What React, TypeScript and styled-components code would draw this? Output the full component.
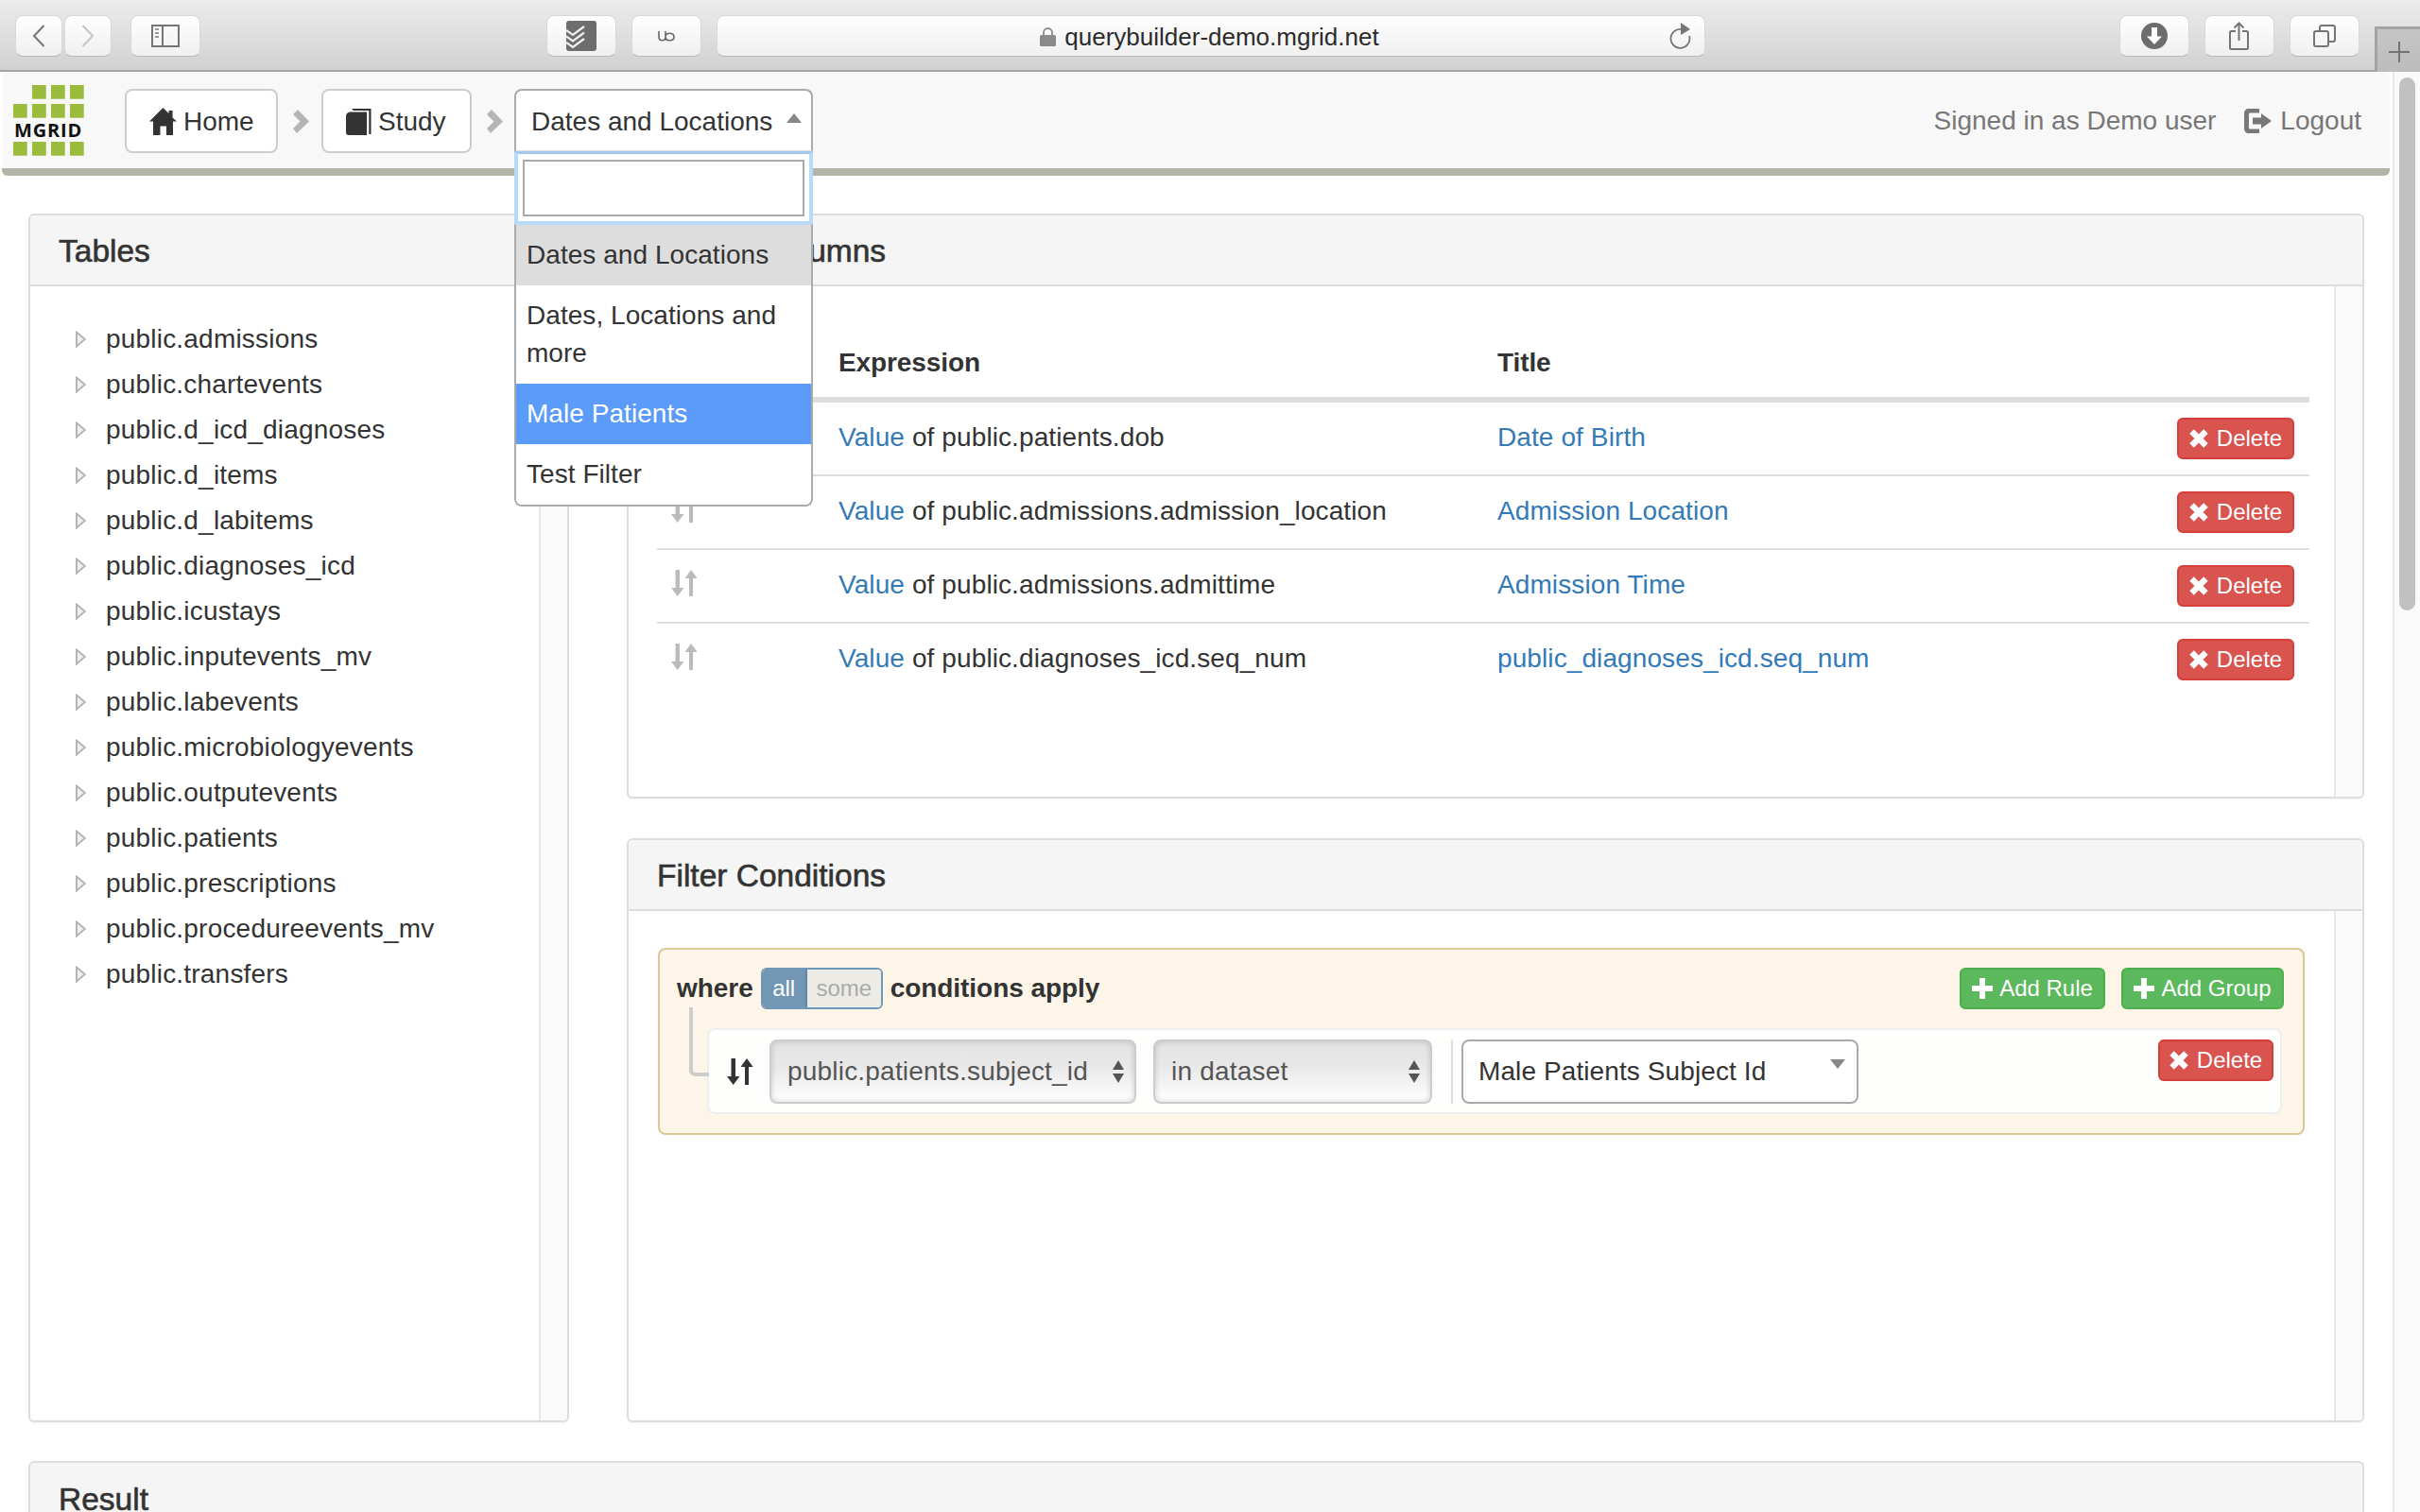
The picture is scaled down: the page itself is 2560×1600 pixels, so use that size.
import React from 'react'
import styled, { createGlobalStyle } from 'styled-components'

const GlobalStyle = createGlobalStyle`
  html, body {
    margin: 0;
    padding: 0;
    height: 1600px;
    overflow: hidden;
    background: #fff;
    font-family: "Liberation Sans", Arial, sans-serif;
    font-size: 28px;
    color: #333;
  }
  * { box-sizing: border-box; }
`

const Window = styled.div`
  width: 2560px;
  height: 1600px;
  display: flex;
  flex-direction: column;
  overflow: hidden;
`

/* browser toolbar */
const Toolbar = styled.div`
  height: 76px;
  flex: none;
  display: flex;
  align-items: flex-start;
  padding-top: 16px;
  padding-left: 16px;
  background: linear-gradient(#ececec, #d1d1d1);
  border-bottom: 2px solid #a6a6a6;
`

const ToolButton = styled.div<{ $w: number; $ml?: number }>`
  width: ${p => p.$w}px;
  height: 44px;
  margin-left: ${p => p.$ml ?? 0}px;
  flex: none;
  display: flex;
  align-items: center;
  justify-content: center;
  background: linear-gradient(#fefefe, #f0f0f0);
  border-radius: 8px;
  border: 1px solid #d8d8d8;
  border-bottom: 1px solid #b8b8b8;
`

const UrlBar = styled(ToolButton)`
  position: relative;
  gap: 9px;
  font-size: 26px;
  color: #2b2b2b;
  padding: 2px 3px 0 0;
`

const ReloadSlot = styled.span`
  position: absolute;
  right: 13px;
  top: 7px;
  display: flex;
`

const NewTab = styled.div`
  width: 48px;
  height: 48px;
  margin-left: 16px;
  margin-top: 12px;
  margin-bottom: -2px;
  padding-top: 2px;
  flex: none;
  display: flex;
  align-items: center;
  justify-content: center;
  background: linear-gradient(#c6c6c6, #bcbcbc);
  border-top: 3px solid #a3a3a3;
  border-left: 3px solid #a3a3a3;
`

const Viewport = styled.div`
  flex: 1;
  min-height: 0;
  display: flex;
`

const Page = styled.div`
  width: 2531px;
  flex: none;
`

const ScrollTrack = styled.div`
  width: 29px;
  flex: none;
  background: #fafafa;
  border-left: 2px solid #e9e9e9;
  padding: 6px 5px 0 5px;
`

const ScrollThumb = styled.div`
  height: 564px;
  border-radius: 9px;
  background: #c1c1c1;
`

/* app nav */
const NavBar = styled.nav`
  height: 110px;
  margin-left: 2px;
  width: 2526px;
  padding: 2px 30px 0 12px;
  display: flex;
  align-items: center;
  background: #f8f8f8;
  border-bottom: 8px solid #b0b5a8;
  border-radius: 6px;
`

const Crumb = styled.div<{ $w: number; $ml?: number; $gap: number }>`
  width: ${p => p.$w}px;
  height: 68px;
  margin-left: ${p => p.$ml ?? 0}px;
  padding: 1px 0 0 24px;
  display: flex;
  flex: none;
  align-items: center;
  gap: ${p => p.$gap}px;
  background: #fff;
  border: 2px solid #ccc;
  border-radius: 8px;
`

const CrumbArrow = styled.svg`
  margin: 0 13px 0 16px;
  flex: none;
`

const SelectWrap = styled.div`
  position: relative;
  width: 316px;
  height: 68px;
  margin-left: -1px;
  flex: none;
`

const SelectHead = styled.div`
  height: 66px;
  padding: 2px 10px 0 16px;
  display: flex;
  align-items: center;
  justify-content: space-between;
  white-space: nowrap;
  background: #fff;
  border: 2px solid #aaa;
  border-bottom: 1px solid #ddd;
  border-radius: 8px 8px 0 0;
`

const CaretUp = styled.span`
  width: 0;
  height: 0;
  margin-top: -8px;
  border-left: 8px solid transparent;
  border-right: 8px solid transparent;
  border-bottom: 10px solid #888;
`

const Menu = styled.div`
  position: absolute;
  left: 0;
  top: 66px;
  width: 316px;
  z-index: 10;
  background: #fff;
  border: 2px solid #aaa;
  border-top: 0;
  border-radius: 0 0 8px 8px;
`

const SearchBox = styled.div`
  height: 78px;
  margin: 0 -2px;
  padding: 6px 5px 5px 5px;
  border: 4px solid #b9d9f8;
  border-top: 3px solid #a3c9ee;
  border-radius: 2px;
  background: #fff;
`

const SearchInput = styled.input`
  display: block;
  width: 100%;
  height: 100%;
  margin: 0;
  padding: 0;
  background: #fff;
  border: 2px solid #aaa;
  outline: none;
  border-radius: 0;
`

const MenuItem = styled.div<{ $tone?: 'current' | 'active' }>`
  padding: 12px 11px;
  line-height: 40px;
  letter-spacing: 0.05px;
  background: ${p => (p.$tone === 'current' ? '#ddd' : p.$tone === 'active' ? '#5b9bf9' : '#fff')};
  color: ${p => (p.$tone === 'active' ? '#fff' : '#333')};
  &:last-child { border-radius: 0 0 6px 6px; }
`

const NavRight = styled.div`
  margin-left: auto;
  display: flex;
  align-items: center;
  color: #777;
  white-space: nowrap;
`

const LogoutLink = styled.span`
  margin-left: 30px;
  display: flex;
  align-items: center;
  gap: 9px;
`

/* panels */
const Columns = styled.div`
  margin-top: 40px;
  padding-left: 30px;
  width: 2501px;
  display: grid;
  grid-template-columns: 572px 1838px;
  column-gap: 61px;
`

const RightStack = styled.div`
  display: flex;
  flex-direction: column;
  gap: 42px;
`

const Panel = styled.section<{ $h: number }>`
  height: ${p => p.$h}px;
  display: flex;
  flex-direction: column;
  border: 2px solid #ddd;
  border-radius: 6px;
  background: #fff;
  box-shadow: 0 1px 1px rgba(0, 0, 0, 0.05);
  overflow: hidden;
`

const PanelHead = styled.div`
  height: 75px;
  flex: none;
  padding: 2px 30px 0;
  display: flex;
  align-items: center;
  background: #f5f5f5;
  border-bottom: 2px solid #ddd;
`

const PanelTitle = styled.h3`
  margin: 0;
  font-size: 33.5px;
  font-weight: 400;
  -webkit-text-stroke: 0.6px #333;
  color: #333;
`

const PanelBody = styled.div`
  flex: 1;
  min-height: 0;
  display: flex;
`

const PanelMain = styled.div`
  flex: 1;
  min-width: 0;
`

const PanelStrip = styled.div`
  width: 30px;
  flex: none;
  background: #fafafa;
  border-left: 2px solid #e8e8e8;
`

/* tree */
const Tree = styled.ul`
  list-style: none;
  margin: 0;
  padding: 32px 0 0 48px;
`

const TreeRow = styled.li`
  height: 48px;
  display: flex;
  align-items: center;
  gap: 21px;
  letter-spacing: 0.2px;
`

/* columns table */
const ColumnTable = styled.div`
  padding: 0 26px 0 30px;
`

const ColumnRow = styled.div<{ $head?: boolean }>`
  display: grid;
  grid-template-columns: 177px 697px 1fr auto;
  align-items: center;
  height: ${p => (p.$head ? 123 : 78)}px;
  padding: ${p => (p.$head ? '45px 16px 0 15px' : '0 16px 0 15px')};
  border-bottom: ${p => (p.$head ? '6px solid #ddd' : '2px solid #ddd')};
  &:last-child { border-bottom-color: transparent; }
  letter-spacing: 0.1px;
`

const HeadCell = styled.div`
  font-weight: 700;
  letter-spacing: -0.1px;
`

const GripCell = styled.span`
  margin-bottom: 7px;
`

const TextCell = styled.span`
  margin-bottom: 3px;
`

const ValueLink = styled.a`
  color: #337ab7;
  text-decoration: none;
`

const DeleteBtn = styled.button<{ $w?: number }>`
  width: ${p => p.$w ?? 124}px;
  height: 44px;
  padding: 0;
  display: inline-flex;
  align-items: center;
  justify-content: center;
  gap: 9px;
  font: 24px "Liberation Sans", Arial, sans-serif;
  color: #fff;
  background: #d9534f;
  border: 2px solid #d43f3a;
  border-radius: 6px;
`

/* filter builder */
const GroupBox = styled.div`
  margin: 39px 31px 0 31px;
  height: 198px;
  padding: 19px 20px 0 18px;
  background: #fcf5e8;
  border: 2px solid #dcc896;
  border-radius: 8px;
`

const GroupHead = styled.div`
  height: 44px;
  display: flex;
  align-items: center;
  font-weight: 700;
  letter-spacing: -0.05px;
`

const Toggle = styled.div`
  width: 129px;
  height: 44px;
  margin: 0 8px 0 8px;
  display: flex;
  font-size: 24px;
  font-weight: 400;
  border: 2px solid #6f97b8;
  border-radius: 6px;
  overflow: hidden;
`

const ToggleOption = styled.span<{ $on?: boolean }>`
  flex: ${p => (p.$on ? '0 0 45px' : 1)};
  display: flex;
  align-items: center;
  justify-content: center;
  background: ${p => (p.$on ? '#7396b4' : '#ecebe6')};
  color: ${p => (p.$on ? '#fff' : '#aaa')};
  border-left: ${p => (p.$on ? 0 : '2px solid #5f87a8')};
`

const AddActions = styled.div`
  margin-left: auto;
  display: flex;
  gap: 17px;
`

const AddBtn = styled.button<{ $w: number }>`
  width: ${p => p.$w}px;
  height: 44px;
  padding: 0;
  display: inline-flex;
  align-items: center;
  justify-content: center;
  gap: 7px;
  font: 24px "Liberation Sans", Arial, sans-serif;
  color: #fff;
  background: #5cb85c;
  border: 2px solid #4cae4c;
  border-radius: 6px;
`

const RuleBox = styled.div`
  position: relative;
  height: 91px;
  margin: 20px 2px 0 32px;
  padding: 10px 7px 0 19px;
  display: flex;
  align-items: flex-start;
  background: #fefefd;
  border: 2px solid #eee;
  border-radius: 8px;
`

const Connector = styled.span`
  position: absolute;
  left: -21px;
  top: -24px;
  width: 21px;
  height: 73px;
  border-left: 4px solid #ccc;
  border-bottom: 4px solid #ccc;
  border-bottom-left-radius: 7px;
`

const GripSlot = styled.span`
  width: 28px;
  height: 68px;
  margin-right: 17px;
  flex: none;
  display: flex;
  align-items: center;
`

const NativeSelect = styled.div<{ $w: number; $ml?: number }>`
  width: ${p => p.$w}px;
  height: 68px;
  margin-left: ${p => p.$ml ?? 0}px;
  flex: none;
  padding: 0 10px 0 17px;
  display: flex;
  align-items: center;
  justify-content: space-between;
  color: #555;
  letter-spacing: 0.2px;
  white-space: nowrap;
  background: linear-gradient(#e4e4e4, #e8e8e8 40%, #fff);
  border: 2px solid #ccc;
  border-radius: 8px;
  box-shadow: inset 0 0 6px rgba(0, 0, 0, 0.18);
`

const Divider = styled.span`
  width: 2px;
  height: 68px;
  margin: 0 9px 0 20px;
  flex: none;
  background: #ddd;
`

const ValueSelect = styled.div`
  width: 420px;
  height: 68px;
  flex: none;
  padding: 0 12px 0 16px;
  display: flex;
  align-items: center;
  justify-content: space-between;
  background: #fff;
  border: 2px solid #aaa;
  border-radius: 8px;
  letter-spacing: 0.1px;
  white-space: nowrap;
`

const CaretDown = styled.span`
  width: 0;
  height: 0;
  margin-top: -16px;
  border-left: 8px solid transparent;
  border-right: 8px solid transparent;
  border-top: 10px solid #888;
`

const RuleDelete = styled(DeleteBtn)`
  margin-left: auto;
`

const ResultWrap = styled.div`
  margin: 41px 30px 0 30px;
`

const ResultHead = styled(PanelHead)`
  border: 2px solid #ddd;
  border-radius: 6px 6px 0 0;
  height: 90px;
  align-items: flex-start;
  padding-top: 20px;
`

/* icons */
const Glyph = styled.svg`
  flex: none;
  display: block;
`

const Sort = ({ color }: { color: string }) => (
  <Glyph width="28" height="28" viewBox="0 0 28 28" fill={color}>
    <path d="M4.500 0h4.500v19h4.500L6.700 28 0 19h4.500zM19 9h-4.500L21 0l6.700 9H23v19h-4z" />
  </Glyph>
)

const TimesIcon = () => (
  <Glyph width="20" height="20" viewBox="0 0 20 20" fill="#fff">
    <path d="M4.800 .3 10 5.500 15.200.3l4.500 4.500L14.500 10l5.200 5.200-4.500 4.500L10 14.500l-5.200 5.200-4.500-4.500L5.500 10 .3 4.800z" />
  </Glyph>
)

const PlusIcon = () => (
  <Glyph width="22" height="22" viewBox="0 0 22 22" fill="#fff">
    <path d="M8 0h6v8h8v6h-8v8H8v-8H0V8h8z" />
  </Glyph>
)

const TreeArrow = () => (
  <Glyph width="11" height="18" viewBox="0 0 11 18">
    <path d="M1 1.500 9.800 9 1 16.500z" fill="#f1f1f1" stroke="#b5b5b5" strokeWidth="2" />
  </Glyph>
)

const SelectArrows = () => (
  <Glyph width="14" height="24" viewBox="0 0 14 24" fill="#555">
    <path d="M7 0l6 10H1zM1 14h12L7 24z" />
  </Glyph>
)

const Chevron = () => (
  <CrumbArrow width="17" height="25" viewBox="0 0 17 25">
    <path d="M0 5l5-5 12 12.500L4 25l-4-5 7.500-7.500z" fill="#b5b5b5" />
  </CrumbArrow>
)

const Logo = () => (
  <Glyph width="76" height="76" viewBox="0 0 76 76">
    <g fill="#9bbb3c">
      {[20, 40, 60].map(x => (
        <rect key={x} x={x} y="0" width="14.700" height="14.700" />
      ))}
      {[0, 20, 40, 60].map(x => (
        <rect key={x} x={x} y="20" width="14.700" height="14.700" />
      ))}
      {[0, 20, 40, 60].map(x => (
        <rect key={x} x={x} y="60" width="14.700" height="14.700" />
      ))}
    </g>
    <text x="37" y="55.300" textAnchor="middle" fontFamily="Open Sans, Liberation Sans, sans-serif" fontSize="20" fontWeight="700" letterSpacing="0.800" fill="#111">
      MGRID
    </text>
  </Glyph>
)

const HomeIcon = () => (
  <Glyph width="30" height="29" viewBox="0 0 30 29" fill="#333">
    <path d="M14.500 0l6 6V3h4v7.500L29 14.500h-4V29h-7v-9.500h-6.500V29H4V14.500H0z" />
  </Glyph>
)

const BookIcon = () => (
  <Glyph width="27" height="28" viewBox="0 0 27 28" fill="#333">
    <path d="M6 0h20.500v27h-2.200V2H8z" />
    <path d="M0 8C0 5 2 3.500 5 3.500h17V28H3c-2 0-3-1-3-3z" />
  </Glyph>
)

const LogoutIcon = () => (
  <Glyph width="29" height="26" viewBox="0 0 29 26" fill="#777">
    <path d="M5 0h11v4.500H6.500C5.500 4.500 5 5 5 6v14c0 1 .5 1.500 1.500 1.500H16V26H5c-3 0-5-2-5-5V5c0-3 2-5 5-5z" />
    <path d="M18 5l11 8-11 8v-4.500H9v-7h9z" />
  </Glyph>
)

const BackIcon = ({ dim }: { dim?: boolean }) => (
  <Glyph width="14" height="24" viewBox="0 0 14 24">
    <path d={dim ? 'M1.500 1 12 12 1.500 23' : 'M12.500 1 2 12l10.500 11'} fill="none" stroke={dim ? '#c4c4c4' : '#757575'} strokeWidth="2" />
  </Glyph>
)

const SidebarIcon = () => (
  <Glyph width="30" height="24" viewBox="0 0 30 24">
    <rect x="1" y="1" width="28" height="22" fill="none" stroke="#757575" strokeWidth="2" />
    <path d="M12 1v22" stroke="#757575" strokeWidth="2" />
    <path d="M4 5h4M4 9h4M4 13h4" stroke="#9a9a9a" strokeWidth="2" />
  </Glyph>
)

const TodoIcon = () => (
  <Glyph width="32" height="32" viewBox="0 0 32 32">
    <rect width="32" height="32" rx="3" fill="#6d6d6d" />
    <path d="M0 10l7 5 12-9M0 16.500l7 5 12-9M0 23l7 5 12-9" fill="none" stroke="#f0f0f0" strokeWidth="2.200" />
  </Glyph>
)

const UbIcon = () => (
  <Glyph width="18" height="12" viewBox="0 0 18 12">
    <path d="M1 1v6c0 5 7 5 7 0V1M8 7c0 5 9 5 9 0s-9-5-9 0z" fill="none" stroke="#666" strokeWidth="1.600" />
  </Glyph>
)

const LockIcon = () => (
  <Glyph width="17" height="20" viewBox="0 0 17 20">
    <path d="M4 8V5.500a4.500 4.500 0 0 1 9 0V8" fill="none" stroke="#8a8a8a" strokeWidth="1.800" />
    <rect y="8" width="17" height="12" rx="1.500" fill="#8a8a8a" />
  </Glyph>
)

const ReloadIcon = () => (
  <Glyph width="24" height="28" viewBox="0 0 24 28">
    <path d="M15 7.500A10 10 0 1 0 21 14" fill="none" stroke="#757575" strokeWidth="1.800" />
    <path d="M12 0l10 7-10 6z" fill="#757575" />
  </Glyph>
)

const DownloadIcon = () => (
  <Glyph width="28" height="28" viewBox="0 0 28 28">
    <circle cx="14" cy="14" r="14" fill="#6d6d6d" />
    <path d="M11 5h6v9.500h5L14 23l-8-8.500h5z" fill="#fff" />
  </Glyph>
)

const ShareIcon = () => (
  <Glyph width="22" height="30" viewBox="0 0 22 30" fill="none" stroke="#757575" strokeWidth="2">
    <path d="M7 10H2.500A1.500 1.500 0 0 0 1 11.500v16A1.500 1.500 0 0 0 2.500 29h16a1.500 1.500 0 0 0 1.500-1.500v-16A1.500 1.500 0 0 0 18.500 10H14M10.500 20V1.500M5.500 6.500l5-5 5 5" />
  </Glyph>
)

const TabsIcon = () => (
  <Glyph width="24" height="24" viewBox="0 0 24 24" fill="none" stroke="#757575" strokeWidth="2">
    <rect x="1" y="7" width="15" height="16" rx="2" />
    <path d="M7 7V3a2 2 0 0 1 2-2h12a2 2 0 0 1 2 2v13a2 2 0 0 1-2 2h-5" />
  </Glyph>
)

const NewTabIcon = () => (
  <Glyph width="22" height="22" viewBox="0 0 22 22">
    <path d="M11 0v22M0 11h22" stroke="#737373" strokeWidth="2" />
  </Glyph>
)

const tables = [
  'public.admissions',
  'public.chartevents',
  'public.d_icd_diagnoses',
  'public.d_items',
  'public.d_labitems',
  'public.diagnoses_icd',
  'public.icustays',
  'public.inputevents_mv',
  'public.labevents',
  'public.microbiologyevents',
  'public.outputevents',
  'public.patients',
  'public.prescriptions',
  'public.procedureevents_mv',
  'public.transfers',
]

const selected = [
  { expr: 'public.patients.dob', title: 'Date of Birth' },
  { expr: 'public.admissions.admission_location', title: 'Admission Location' },
  { expr: 'public.admissions.admittime', title: 'Admission Time' },
  { expr: 'public.diagnoses_icd.seq_num', title: 'public_diagnoses_icd.seq_num' },
]

const App: React.FC = () => (
  <Window>
    <GlobalStyle />
    <Toolbar>
      <ToolButton $w={50}><BackIcon /></ToolButton>
      <ToolButton $w={50} $ml={2}><BackIcon dim /></ToolButton>
      <ToolButton $w={74} $ml={20}><SidebarIcon /></ToolButton>
      <ToolButton $w={74} $ml={366}><TodoIcon /></ToolButton>
      <ToolButton $w={74} $ml={16}><UbIcon /></ToolButton>
      <UrlBar $w={1046} $ml={16}>
        <LockIcon />
        querybuilder-demo.mgrid.net
        <ReloadSlot><ReloadIcon /></ReloadSlot>
      </UrlBar>
      <ToolButton $w={74} $ml={438}><DownloadIcon /></ToolButton>
      <ToolButton $w={74} $ml={16}><ShareIcon /></ToolButton>
      <ToolButton $w={74} $ml={16}><TabsIcon /></ToolButton>
      <NewTab><NewTabIcon /></NewTab>
    </Toolbar>

    <Viewport>
      <Page>
        <NavBar>
          <Logo />
          <Crumb $ml={42} $w={162} $gap={6}>
            <HomeIcon />
            Home
          </Crumb>
          <Chevron />
          <Crumb $w={159} $gap={7}>
            <BookIcon />
            Study
          </Crumb>
          <Chevron />
          <SelectWrap>
            <SelectHead>
              Dates and Locations
              <CaretUp />
            </SelectHead>
            <Menu>
              <SearchBox>
                <SearchInput />
              </SearchBox>
              <MenuItem $tone="current">Dates and Locations</MenuItem>
              <MenuItem>Dates, Locations and more</MenuItem>
              <MenuItem $tone="active">Male Patients</MenuItem>
              <MenuItem>Test Filter</MenuItem>
            </Menu>
          </SelectWrap>
          <NavRight>
            Signed in as Demo user
            <LogoutLink>
              <LogoutIcon />
              Logout
            </LogoutLink>
          </NavRight>
        </NavBar>

        <Columns>
          <Panel $h={1279}>
            <PanelHead>
              <PanelTitle>Tables</PanelTitle>
            </PanelHead>
            <PanelBody>
              <PanelMain>
                <Tree>
                  {tables.map(name => (
                    <TreeRow key={name}>
                      <TreeArrow />
                      {name}
                    </TreeRow>
                  ))}
                </Tree>
              </PanelMain>
              <PanelStrip />
            </PanelBody>
          </Panel>

          <RightStack>
            <Panel $h={619}>
              <PanelHead>
                <PanelTitle>Output Columns</PanelTitle>
              </PanelHead>
              <PanelBody>
                <PanelMain>
                  <ColumnTable>
                    <ColumnRow $head>
                      <span />
                      <HeadCell>Expression</HeadCell>
                      <HeadCell>Title</HeadCell>
                      <span />
                    </ColumnRow>
                    {selected.map(row => (
                      <ColumnRow key={row.title}>
                        <GripCell>
                          <Sort color="#bbb" />
                        </GripCell>
                        <TextCell>
                          <ValueLink>Value</ValueLink> of {row.expr}
                        </TextCell>
                        <TextCell>
                          <ValueLink>{row.title}</ValueLink>
                        </TextCell>
                        <DeleteBtn>
                          <TimesIcon />
                          Delete
                        </DeleteBtn>
                      </ColumnRow>
                    ))}
                  </ColumnTable>
                </PanelMain>
                <PanelStrip />
              </PanelBody>
            </Panel>

            <Panel $h={618}>
              <PanelHead>
                <PanelTitle>Filter Conditions</PanelTitle>
              </PanelHead>
              <PanelBody>
                <PanelMain>
                  <GroupBox>
                    <GroupHead>
                      where
                      <Toggle>
                        <ToggleOption $on>all</ToggleOption>
                        <ToggleOption>some</ToggleOption>
                      </Toggle>
                      conditions apply
                      <AddActions>
                        <AddBtn $w={154}>
                          <PlusIcon />
                          Add Rule
                        </AddBtn>
                        <AddBtn $w={172}>
                          <PlusIcon />
                          Add Group
                        </AddBtn>
                      </AddActions>
                    </GroupHead>
                    <RuleBox>
                      <Connector />
                      <GripSlot>
                        <Sort color="#333" />
                      </GripSlot>
                      <NativeSelect $w={388}>
                        public.patients.subject_id
                        <SelectArrows />
                      </NativeSelect>
                      <NativeSelect $w={295} $ml={18}>
                        in dataset
                        <SelectArrows />
                      </NativeSelect>
                      <Divider />
                      <ValueSelect>
                        Male Patients Subject Id
                        <CaretDown />
                      </ValueSelect>
                      <RuleDelete $w={122}>
                        <TimesIcon />
                        Delete
                      </RuleDelete>
                    </RuleBox>
                  </GroupBox>
                </PanelMain>
                <PanelStrip />
              </PanelBody>
            </Panel>
          </RightStack>
        </Columns>

        <ResultWrap>
          <ResultHead>
            <PanelTitle>Result</PanelTitle>
          </ResultHead>
        </ResultWrap>
      </Page>
      <ScrollTrack>
        <ScrollThumb />
      </ScrollTrack>
    </Viewport>
  </Window>
)

export default App
